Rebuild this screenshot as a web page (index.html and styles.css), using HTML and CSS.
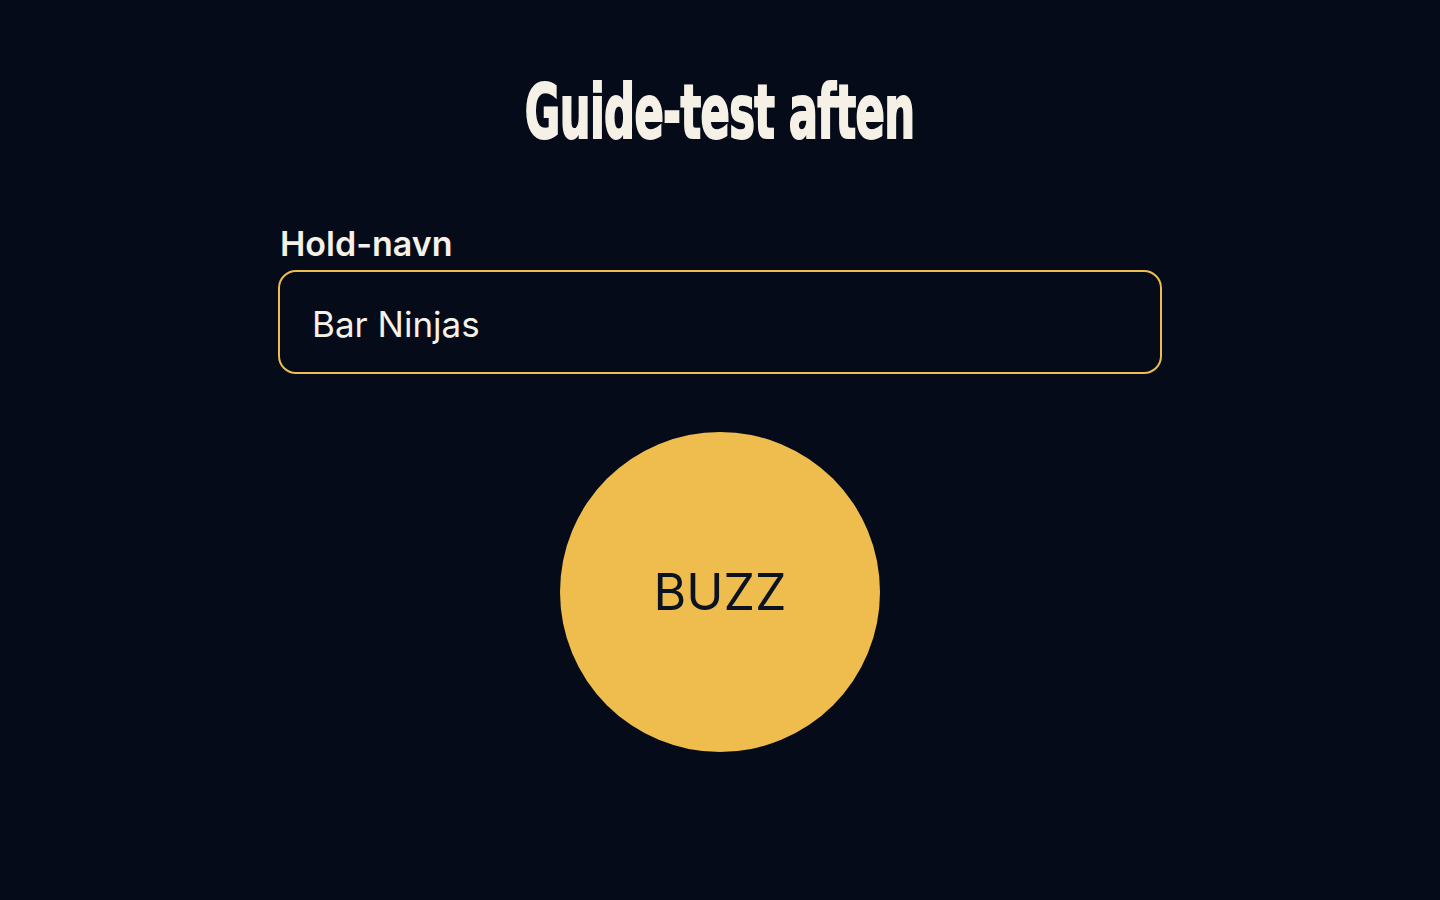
FILE: index.html
```html
<!DOCTYPE html>
<html lang="da">
<head>
<meta charset="utf-8">
<title>Guide-test aften</title>
<link rel="stylesheet" href="styles.css">
</head>
<body>
<main class="page">
  <h1 class="title"><span class="title-text">Guide-test aften</span></h1>
  <form class="form">
    <label class="label" for="team">Hold-navn</label>
    <input class="input" id="team" type="text" value="Bar Ninjas">
    <div class="buzz-row">
      <button class="buzz" type="button">BUZZ</button>
    </div>
  </form>
</main>
</body>
</html>
```
FILE: styles.css
```css
html, body {
  margin: 0;
  padding: 0;
  background: #050b18;
  height: 100%;
}
body {
  font-family: Inter, "Noto Sans", sans-serif;
  color: #f6f1e7;
}
.page {
  display: flex;
  flex-direction: column;
  align-items: center;
  padding-top: 70px;
}
.title {
  margin: 0;
  height: 84px;
  display: flex;
  justify-content: center;
  align-items: center;
  font-family: "DejaVu Sans Condensed", "Liberation Sans", sans-serif;
  font-weight: 700;
  font-size: 74px;
  line-height: 1;
  color: #f6f1e7;
}
.title-text {
  display: inline-block;
  transform: scaleX(0.65);
  -webkit-text-stroke: 2px #f6f1e7;
  letter-spacing: -1px;
}
.form {
  width: 884px;
  margin-top: 70px;
  display: flex;
  flex-direction: column;
}
.label {
  font-size: 34px;
  font-weight: 600;
  line-height: 40px;
  padding-left: 2px;
  margin-bottom: 6px;
}
.input {
  box-sizing: border-box;
  width: 884px;
  height: 104px;
  border: 2px solid #eebd4d;
  border-radius: 18px;
  background: #050b18;
  color: #f6f1e7;
  font-family: Inter, "Noto Sans", sans-serif;
  font-size: 35px;
  padding: 4px 32px 0;
  outline: none;
}
.buzz-row {
  display: flex;
  justify-content: center;
  margin-top: 58px;
}
.buzz {
  width: 320px;
  height: 320px;
  border-radius: 50%;
  border: none;
  background: #eebd4d;
  color: #0b1220;
  font-family: Inter, "Noto Sans", sans-serif;
  font-size: 50px;
  font-weight: 400;
  padding: 0;
}
```
